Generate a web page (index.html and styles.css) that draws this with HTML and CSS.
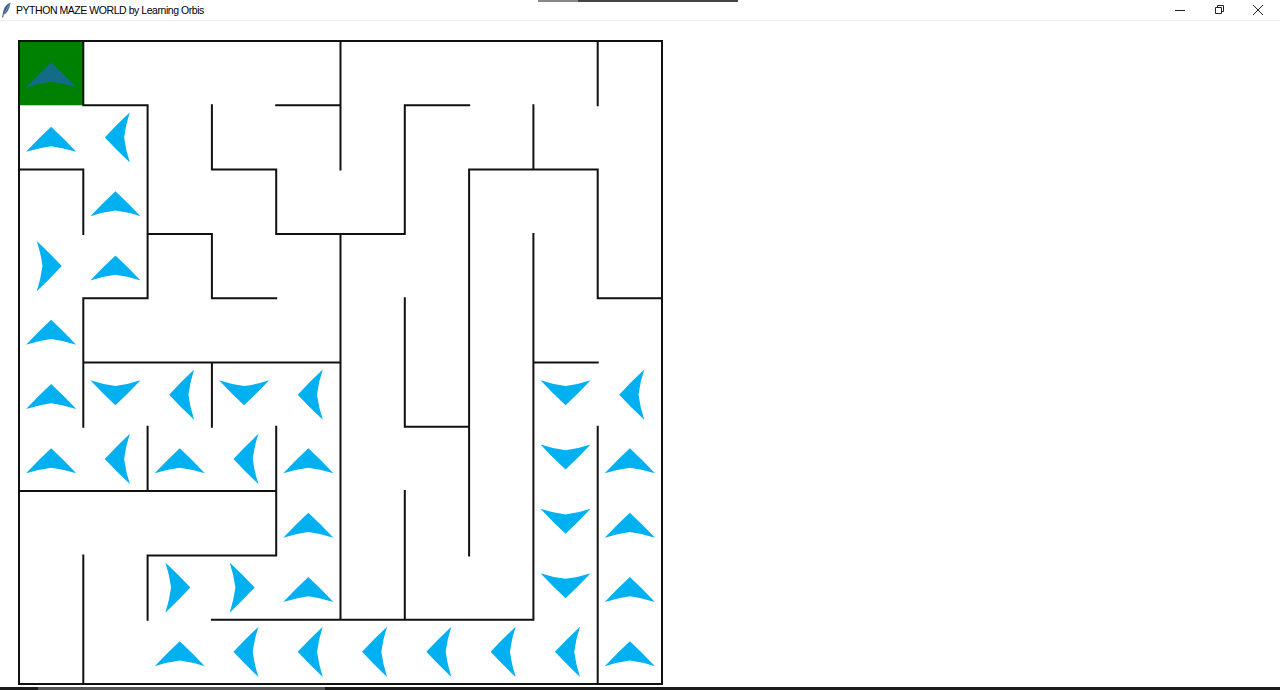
FILE: index.html
```html
<!DOCTYPE html>
<html>
<head>
<meta charset="utf-8">
<title>PYTHON MAZE WORLD by Learning Orbis</title>
<link rel="stylesheet" href="styles.css">
</head>
<body>
<div class="window">
  <div class="titlebar">
    <div class="title">
      <svg class="feather" width="10" height="16" viewBox="0 0 10 16">
        <path d="M9.5 0.5 C5.5 2 2.5 6 1.8 12 L1 15.5 L2.2 15.6 L2.8 12.8 C6.5 11 8.8 6 9.5 0.5Z" fill="#3f5f8f"/>
        <path d="M9 1.5 L2.4 13" stroke="#9fb3d1" stroke-width="0.6"/>
      </svg>
      <span>PYTHON MAZE WORLD by Learning Orbis</span>
    </div>
    <div class="controls">
      <svg width="12" height="12" viewBox="0 0 12 12"><path d="M1 6.5H11" stroke="#222" stroke-width="1"/></svg>
      <svg width="12" height="12" viewBox="0 0 12 12"><path d="M2.5 3.5H8.5V9.5H2.5Z M4.5 3.5V1.5H10.5V7.5H8.5" stroke="#222" stroke-width="1" fill="none"/></svg>
      <svg width="12" height="12" viewBox="0 0 12 12"><path d="M1 1L11 11M11 1L1 11" stroke="#222" stroke-width="1"/></svg>
    </div>
    <div class="snapbar"></div>
  </div>

  <div class="canvas">
    <svg class="maze" width="1280" height="666" viewBox="0 0 1280 666">
      <defs>
        <path id="u" d="M0 -.165 Q.2 .02 .39 .224 Q.2 .16 0 .135 Q-.2 .16 -.39 .224 Q-.2 .02 0 -.165Z"/>
        <use id="d" href="#u" transform="rotate(180)"/>
        <use id="l" href="#u" transform="rotate(-90)"/>
        <use id="r" href="#u" transform="rotate(90)"/>
      </defs>
      <g transform="translate(19 20) scale(64.3)">
        <rect class="start" x="0" y="0" width="1" height="1"/>

        <!-- path the turtle took -->
        <g class="arrows">
          <use href="#u" x=".5" y=".5" class="home"/>
          <use href="#u" x=".5" y="1.5"/><use href="#l" x="1.5" y="1.5"/>
          <use href="#u" x="1.5" y="2.5"/>
          <use href="#r" x=".5" y="3.5"/><use href="#u" x="1.5" y="3.5"/>
          <use href="#u" x=".5" y="4.5"/>
          <use href="#u" x=".5" y="5.5"/><use href="#d" x="1.5" y="5.5"/><use href="#l" x="2.5" y="5.5"/>
          <use href="#d" x="3.5" y="5.5"/><use href="#l" x="4.5" y="5.5"/>
          <use href="#d" x="8.5" y="5.5"/><use href="#l" x="9.5" y="5.5"/>
          <use href="#u" x=".5" y="6.5"/><use href="#l" x="1.5" y="6.5"/><use href="#u" x="2.5" y="6.5"/>
          <use href="#l" x="3.5" y="6.5"/><use href="#u" x="4.5" y="6.5"/>
          <use href="#d" x="8.5" y="6.5"/><use href="#u" x="9.5" y="6.5"/>
          <use href="#u" x="4.5" y="7.5"/><use href="#d" x="8.5" y="7.5"/><use href="#u" x="9.5" y="7.5"/>
          <use href="#r" x="2.5" y="8.5"/><use href="#r" x="3.5" y="8.5"/><use href="#u" x="4.5" y="8.5"/>
          <use href="#d" x="8.5" y="8.5"/><use href="#u" x="9.5" y="8.5"/>
          <use href="#u" x="2.5" y="9.5"/><use href="#l" x="3.5" y="9.5"/><use href="#l" x="4.5" y="9.5"/>
          <use href="#l" x="5.5" y="9.5"/><use href="#l" x="6.5" y="9.5"/><use href="#l" x="7.5" y="9.5"/>
          <use href="#l" x="8.5" y="9.5"/><use href="#u" x="9.5" y="9.5"/>
        </g>

        <!-- walls, in cell units -->
        <path class="walls" d="M0 0H10V10H0Z
          M1 1H2 M4 1H5 M6 1H7
          M0 2H1 M3 2H4 M7 2H9
          M2 3H3 M4 3H6
          M1 4H2 M3 4H4 M9 4H10
          M1 5H5 M8 5H9
          M6 6H7
          M0 7H4
          M2 8H4
          M3 9H8
          M1 0V1 M1 2V3 M1 4V6 M1 8V10
          M2 1V4 M2 6V7 M2 8V9
          M3 1V2 M3 3V4 M3 5V6
          M4 2V3 M4 6V8
          M5 0V2 M5 3V9
          M6 1V3 M6 4V6 M6 7V9
          M7 2V8
          M8 1V2 M8 3V9
          M9 0V1 M9 2V4 M9 6V10"/>
      </g>
    </svg>
  </div>

  <div class="taskbar"><div class="thumb"></div></div>
</div>
</body>
</html>
```

FILE: styles.css
```css
*{margin:0;padding:0;box-sizing:border-box;}
body{background:#fff;font-family:"Liberation Sans","Noto Sans",sans-serif;overflow:hidden;}
.window{width:1280px;height:690px;display:flex;flex-direction:column;background:#fff;}

.titlebar{position:relative;height:21px;display:flex;align-items:center;justify-content:space-between;border-bottom:1px solid #efefef;background:#fff;}
.title{display:flex;align-items:center;gap:5px;padding-left:1px;font-size:10.5px;color:#000;line-height:1;}
.title span{letter-spacing:-0.45px;}
.feather{display:block;}
.controls{display:flex;gap:27px;padding-right:16px;}
.controls svg{display:block;}
.snapbar{position:absolute;left:538px;top:0;width:200px;height:2px;background:linear-gradient(90deg,#888 0,#888 40px,#444 40px,#444 100%);}

.canvas{flex:1;position:relative;overflow:hidden;}
.maze{display:block;}
.start{fill:#008000;}
.arrows use{fill:#00b0f0;}
.arrows use.home{fill:#136c86;}
.walls{fill:none;stroke:#111;stroke-width:2px;vector-effect:non-scaling-stroke;stroke-linecap:square;}

.taskbar{height:3px;background:#1c1c1c;position:relative;}
.thumb{position:absolute;left:38px;top:0;width:287px;height:3px;background:#555;}
```
